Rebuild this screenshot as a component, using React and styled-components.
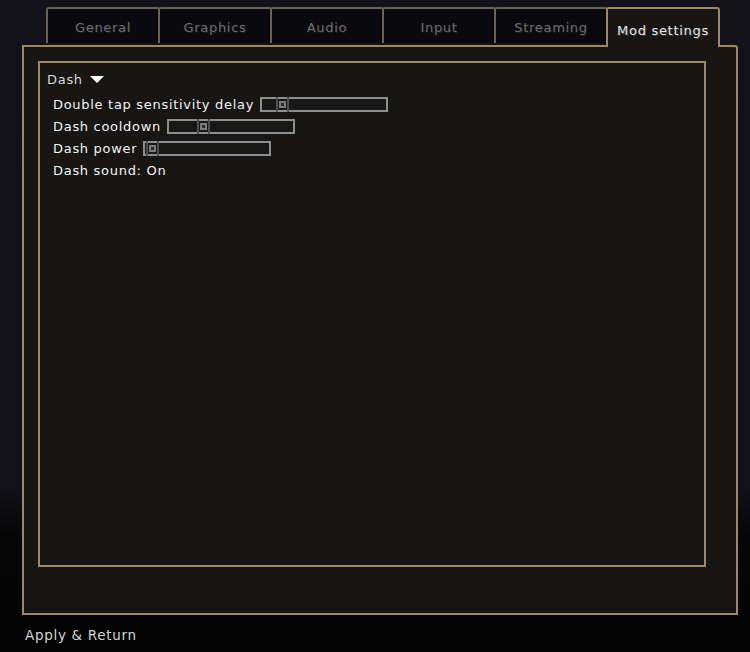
import React from 'react';
import styled, { createGlobalStyle } from "styled-components";

const Global = createGlobalStyle`
    html, body {
        margin: 0;
        padding: 0;
        background: #050506;
    }
    * {
        box-sizing: border-box;
    }
`;

const Page = styled.div`
    width: 750px;
    height: 652px;
    overflow: hidden;
    padding: 7px 12px 0 22px;
    background: linear-gradient(180deg, #13121a 0%, #121119 75%, #050506 82%, #030303 100%);
    font-family: "DejaVu Sans", "Verdana", sans-serif;
    font-size: 13px;
    letter-spacing: 0.7px;
`;

const TabBar = styled.div`
    display: flex;
    align-items: flex-end;
    height: 40px;
    padding-left: 24px;
    margin-bottom: -2px;
    position: relative;
    z-index: 1;
`;

const Tab = styled.div`
    width: 114px;
    margin-right: -2px;
    height: ${p => p.$active ? "40px" : "36px"};
    margin-bottom: ${p => p.$active ? "0" : "4px"};
    border: 2px solid ${p => p.$active ? "#9c8769" : "#6a6255"};
    border-bottom: none;
    border-radius: 3px 3px 0 0;
    background: ${p => p.$active ? "#171615" : "#0a090d"};
    color: ${p => p.$active ? "#e6e6e6" : "#6c6c6c"};
    text-shadow: ${p => p.$active ? "1px 1px 0 #3a3a3a" : "1px 1px 0 #1e1e22"};
    display: flex;
    align-items: center;
    justify-content: center;
    padding-top: ${p => p.$active ? "4px" : "3px"};
    position: relative;
    z-index: ${p => p.$active ? 2 : 1};
`;

const Panel = styled.div`
    width: 716px;
    height: 570px;
    border: 2px solid #9c8769;
    border-radius: 0 3px 0 0;
    background: #171615;
    padding: 14px 30px 46px 14px;
    display: flex;
`;

const Inner = styled.div`
    flex: 1;
    border: 2px solid #9c8769;
    padding: 7px 7px;
    display: flex;
    flex-direction: column;
`;

const Header = styled.div`
    display: flex;
    align-items: center;
    gap: 7px;
    color: #d6d6d6;
    height: 18px;
    margin-bottom: 5px;
`;

const Row = styled.div`
    display: flex;
    align-items: center;
    height: 22px;
    padding-left: 6px;
    color: #f2f2f2;
`;

const Track = styled.div`
    position: relative;
    width: 128px;
    height: 15px;
    margin-left: 6px;
    border: 2px solid #8e8e8e;
    background: #181817;
`;

const Handle = styled.div`
    position: absolute;
    top: -2px;
    width: 13px;
    height: 15px;
    border-left: 2px solid #505050;
    border-right: 2px solid #505050;
    display: flex;
    align-items: center;
    justify-content: center;
`;

const Knob = styled.div`
    width: 7px;
    height: 7px;
    border: 2px solid #7c7c7c;
    background: #2e2e2e;
`;

const Footer = styled.div`
    color: #d4d4d4;
    font-size: 13.5px;
    padding: 12px 0 0 3px;
`;

const tabs = ["General", "Graphics", "Audio", "Input", "Streaming", "Mod settings"];

const sliders = [
    { label: "Double tap sensitivity delay", value: 0.13 },
    { label: "Dash cooldown", value: 0.25 },
    { label: "Dash power", value: 0.01 },
];

const Slider = ({ value }) => (
    <Track>
        <Handle style={{ left: `${Math.round(value * 111)}px` }}>
            <Knob />
        </Handle>
    </Track>
);

export default function App() {
    return (
        <Page>
            <Global />
            <TabBar>
                {tabs.map(t => (
                    <Tab key={t} $active={t === "Mod settings"}>{t}</Tab>
                ))}
            </TabBar>
            <Panel>
                <Inner>
                    <Header>
                        Dash
                        <svg width="14" height="7" viewBox="0 0 14 7">
                            <polygon points="0,0 14,0 7,7" fill="#ffffff" />
                        </svg>
                    </Header>
                    {sliders.map(s => (
                        <Row key={s.label}>
                            {s.label}
                            <Slider value={s.value} />
                        </Row>
                    ))}
                    <Row>Dash sound: On</Row>
                </Inner>
            </Panel>
            <Footer>Apply &amp; Return</Footer>
        </Page>
    );
}
